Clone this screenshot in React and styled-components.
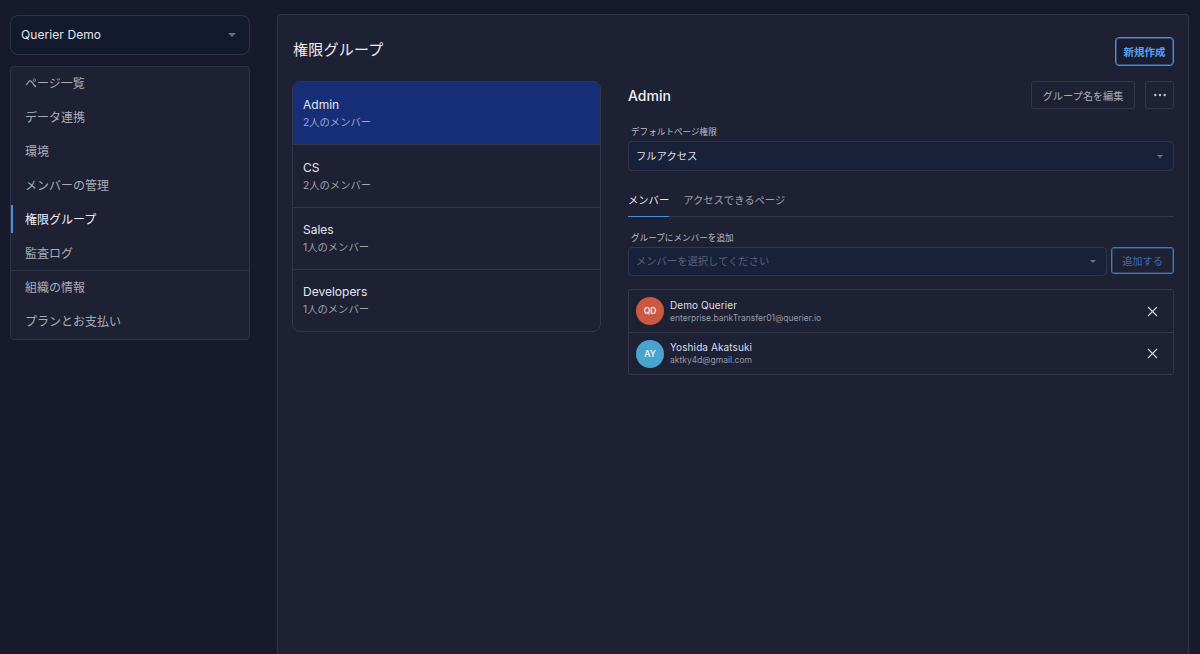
import React from 'react';
import styled, { createGlobalStyle } from 'styled-components';
import { X, Ellipsis } from 'lucide-react';

const Global = createGlobalStyle`
  html, body { margin: 0; padding: 0; height: 100%; overflow: hidden; background: #171a2c; }
  body { font-family: Inter, "Noto Sans CJK JP", sans-serif; color: #e6e8ef; }
  * { box-sizing: border-box; }
`;
const Page = styled.div`
  width: 1200px; height: 654px; display: flex; align-items: flex-start; overflow: hidden;
  background: #171a2c; padding: 14px 11px 0 10px;
`;
const Sidebar = styled.aside`
  width: 240px; flex: none; display: flex; flex-direction: column; gap: 11px; padding-top: 1px;
`;
const OrgSelect = styled.div`
  height: 40px; border: 1px solid #2f3347; border-radius: 8px; background: #141a2e;
  display: flex; align-items: center; justify-content: space-between; padding: 0 13px 1px 10px;
  font-size: 12px; letter-spacing: .08px; color: #e2e5ec;
`;
const Caret = styled.span`
  width: 0; height: 0; margin-top: ${p => p.$m || 3}px;
  border-left: ${p => p.$s || 3}px solid transparent; border-right: ${p => p.$s || 3}px solid transparent;
  border-top: ${p => p.$s || 3}px solid ${p => p.$c || '#6f7486'}; display: block;
`;
const Nav = styled.nav`
  border: 1px solid #2f3347; border-radius: 4px; background: #1e2033; display: flex; flex-direction: column;
`;
const NavItem = styled.div`
  height: ${p => p.$sep ? 35 : 34}px; display: flex; align-items: center; padding: 0 0 3px 14px; position: relative;
  font-size: 12px; color: ${p => p.$active ? '#eceef4' : '#a9acb8'};
  ${p => p.$sep && 'border-top: 1px solid #2f3347; margin-top: -1px;'}
  ${p => p.$active && `&::before { content: ''; position: absolute; left: 0; top: 2px; bottom: 4px; width: 2px; background: #4a8fdc; }`}
`;
const Main = styled.main`
  margin-left: 27px; width: 912px; height: 660px; flex: none; border: 1px solid #34374b; border-bottom: 0;
  border-radius: 4px 4px 0 0; background: #1e2033; padding: 21px 14px 0;
`;
const Header = styled.header`
  height: 30px; display: flex; align-items: center; justify-content: space-between; margin-bottom: 15px;
`;
const Title = styled.h1`
  margin: 0 0 6px 1px; font-size: 15px; font-weight: 400; color: #eceef4; letter-spacing: .25px;
`;
const NewButton = styled.button`
  width: 59px; height: 29px; border: 1px solid #4a8fdc; box-shadow: inset 0 0 0 1px rgba(74, 143, 220, .45);
  border-radius: 4px; background: #1a1d30; padding: 0;
  font: 600 10.5px Inter, "Noto Sans CJK JP", sans-serif; color: #58a0ee;
`;
const Columns = styled.div`
  display: flex; gap: 27px; align-items: flex-start;
`;
const GroupList = styled.div`
  width: 309px; flex: none; border: 1px solid #34374b; border-radius: 8px; overflow: hidden; display: flex; flex-direction: column;
`;
const GroupRow = styled.div`
  height: 62.25px; padding: 0 10px; display: flex; flex-direction: column; justify-content: center; gap: 1px;
  background: ${p => p.$active ? '#162d77' : 'transparent'};
  & + & { border-top: 1px solid #34374b; }
`;
const GroupName = styled.div`
  font-size: 12px; line-height: 18px; color: #e4e7ef;
`;
const GroupSub = styled.div`
  font-size: 10.3px; line-height: 15px; color: ${p => p.$active ? '#9aa7d0' : '#a0a3b0'};
`;
const Detail = styled.section`
  width: 546px; flex: none; display: flex; flex-direction: column;
`;
const DetailHead = styled.div`
  height: 28px; display: flex; align-items: center; gap: 10px; margin-bottom: 16px;
`;
const DetailName = styled.h2`
  margin: 0; margin-right: auto; font-size: 14px; font-weight: 500; color: #f0f1f6;
`;
const GhostButton = styled.button`
  height: 28px; width: ${p => p.$w}px; border: 1px solid #34374b; border-radius: 3px; background: transparent; padding: 0;
  display: flex; align-items: center; justify-content: center;
  font: 400 10.2px Inter, "Noto Sans CJK JP", sans-serif; color: #a9acb8;
`;
const FieldLabel = styled.label`
  display: block; font-size: 8.6px; line-height: 14px; color: #b8bbc6; padding-left: 3px; margin-bottom: 2px;
`;
const SelectBox = styled.div`
  height: ${p => p.$h || 30}px; flex: ${p => p.$grow ? '1' : 'none'}; border: 1px solid #34374b; border-radius: 4px; background: #192039;
  display: flex; align-items: center; justify-content: space-between; padding: 0 10px ${p => p.$h ? 3 : 2}px 7px;
  font-size: 10.3px; color: ${p => p.$placeholder ? '#5c6177' : '#dfe2ea'};
`;
const Tabs = styled.div`
  display: flex; gap: 14px; margin-top: 19px; height: 27px; border-bottom: 1px solid #34374b;
`;
const Tab = styled.div`
  height: 27px; font-size: 10.3px; line-height: 20px; color: ${p => p.$active ? '#e6e8ef' : '#a0a3b0'};
  ${p => p.$active && 'border-bottom: 1px solid #4a8fdc;'}
`;
const AddField = styled.div`
  margin-top: 14px;
`;
const AddRow = styled.div`
  display: flex; gap: 4px; height: 29px;
`;
const AddButton = styled.button`
  width: 63px; height: 27px; border: 1px solid #3f78c8; box-shadow: inset 0 0 0 1px rgba(63, 120, 200, .4);
  border-radius: 3px; background: transparent; padding: 0;
  font: 400 10.2px Inter, "Noto Sans CJK JP", sans-serif; color: #3d6fb5;
`;
const Members = styled.div`
  margin-top: 13px; border: 1px solid #34374b; border-radius: 3px; display: flex; flex-direction: column;
`;
const MemberRow = styled.div`
  height: 42px; display: flex; align-items: center; padding: 0 12px 0 7px; gap: 6px;
  & + & { border-top: 1px solid #34374b; }
`;
const Avatar = styled.div`
  width: 28px; height: 28px; border-radius: 50%; background: ${p => p.$c}; flex: none;
  display: flex; align-items: center; justify-content: center; font-size: 8.5px; font-weight: 600; color: #eef0f4;
`;
const MemberText = styled.div`
  flex: 1; display: flex; flex-direction: column;
`;
const MemberName = styled.div`
  font-size: 10px; line-height: 14px; color: #dcdfe8; letter-spacing: .1px;
`;
const MemberMail = styled.div`
  font-size: 8.5px; line-height: 13px; color: #969aa8;
`;
const RemoveIcon = styled(X)`
  color: #d5d8e0; display: block;
`;

const nav = ['ページ一覧', 'データ連携', '環境', 'メンバーの管理', '権限グループ', '監査ログ', '組織の情報', 'プランとお支払い'];
const groups = [['Admin', '2人のメンバー'], ['CS', '2人のメンバー'], ['Sales', '1人のメンバー'], ['Developers', '1人のメンバー']];
const members = [
  ['QD', '#c95a3f', 'Demo Querier', 'enterprise.bankTransfer01@querier.io'],
  ['AY', '#4aa3cc', 'Yoshida Akatsuki', 'aktky4d@gmail.com'],
];

export default function App() {
  return (
    <Page>
      <Global />
      <Sidebar>
        <OrgSelect>Querier Demo<Caret $s={4} $m={1} $c="#666b7d" /></OrgSelect>
        <Nav>
          {nav.map((n, i) => <NavItem key={n} $active={i === 4} $sep={i === 6}>{n}</NavItem>)}
        </Nav>
      </Sidebar>
      <Main>
        <Header>
          <Title>権限グループ</Title>
          <NewButton>新規作成</NewButton>
        </Header>
        <Columns>
          <GroupList>
            {groups.map(([a, b], i) => (
              <GroupRow key={a} $active={i === 0}>
                <GroupName>{a}</GroupName>
                <GroupSub $active={i === 0}>{b}</GroupSub>
              </GroupRow>
            ))}
          </GroupList>
          <Detail>
            <DetailHead>
              <DetailName>Admin</DetailName>
              <GhostButton $w={104}>グループ名を編集</GhostButton>
              <GhostButton $w={29}><Ellipsis size={16} strokeWidth={1.6} color="#c5c8d2" /></GhostButton>
            </DetailHead>
            <FieldLabel>デフォルトページ権限</FieldLabel>
            <SelectBox>フルアクセス<Caret /></SelectBox>
            <Tabs>
              <Tab $active>メンバー</Tab>
              <Tab>アクセスできるページ</Tab>
            </Tabs>
            <AddField>
              <FieldLabel>グループにメンバーを追加</FieldLabel>
              <AddRow>
                <SelectBox $grow $placeholder $h={29}>メンバーを選択してください<Caret /></SelectBox>
                <AddButton>追加する</AddButton>
              </AddRow>
            </AddField>
            <Members>
              {members.map(([i, c, n, m]) => (
                <MemberRow key={n}>
                  <Avatar $c={c}>{i}</Avatar>
                  <MemberText>
                    <MemberName>{n}</MemberName>
                    <MemberMail>{m}</MemberMail>
                  </MemberText>
                  <RemoveIcon size={17} strokeWidth={1.6} />
                </MemberRow>
              ))}
            </Members>
          </Detail>
        </Columns>
      </Main>
    </Page>
  );
}
